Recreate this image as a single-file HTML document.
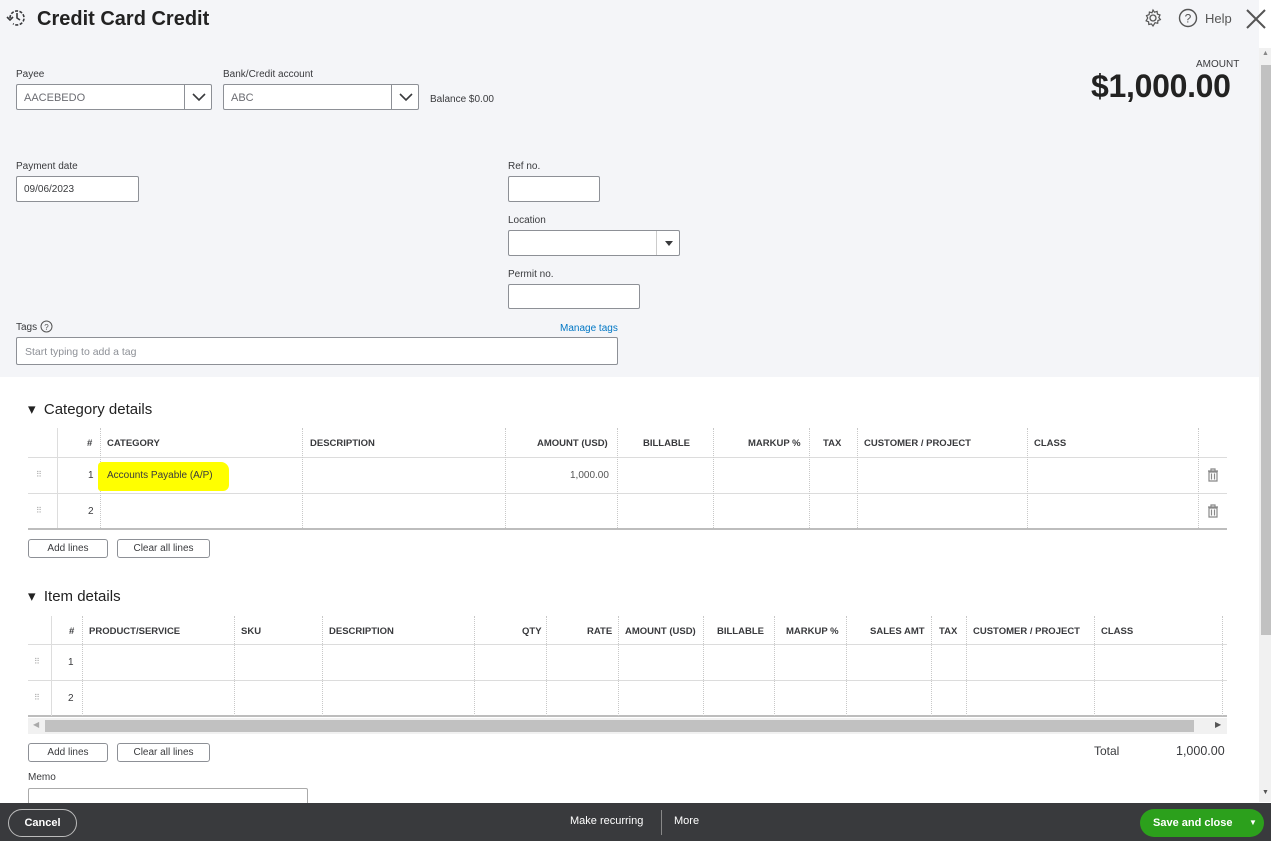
<!DOCTYPE html>
<html><head><meta charset="utf-8"><style>
*{box-sizing:border-box;margin:0;padding:0}
body{width:1271px;height:841px;overflow:hidden;position:relative;background:#fff;font-family:"Liberation Sans",Arial,sans-serif;color:#393a3d;font-size:11px}
.a{position:absolute}
.top{left:0;top:0;width:1259px;height:377px;background:#f4f5f8}
.lbl{font-size:10px;color:#393a3d}
.inp{background:#fff;border:1px solid #8d9096;border-radius:2px}
.th{font-size:9.5px;font-weight:bold;color:#393a3d;top:0}
.vl{width:0;border-left:1px dotted #c8c8c8}
.hl{height:1px;background:#dcdcdc}
.btn{border:1px solid #8d9096;border-radius:3px;background:#fff;font-size:10px;text-align:center;line-height:17px;height:19px}
</style></head><body>
<div class="a top"></div>
<svg class="a" style="left:6px;top:8px" width="22" height="20" viewBox="0 0 22 20"><path d="M4 10a7 7 0 1 1 3 5.7" fill="none" stroke="#393a3d" stroke-width="1.6" stroke-dasharray="3 1.5"/><path d="M11 5v5l3 2" fill="none" stroke="#393a3d" stroke-width="1.6"/><path d="M1 9l3 3 3-3" fill="none" stroke="#393a3d" stroke-width="1.6"/></svg>
<div class="a" style="left:37px;top:8px;font-size:20px;font-weight:bold;color:#222">Credit Card Credit</div>
<svg class="a" style="left:1143px;top:8px" width="20" height="20" viewBox="0 0 20 20"><circle cx="10" cy="10" r="3" fill="none" stroke="#555" stroke-width="1.3"/><path d="M10 2l1.5 2.2 2.6-.8.3 2.7 2.6.9-1.2 2.4 1.6 2.2-2.5 1-.2 2.7-2.6-.6L10 18l-1.6-2.1-2.6.6-.2-2.7-2.5-1L4.7 10 3.5 7.6l2.6-.9.3-2.7 2.6.8z" fill="none" stroke="#555" stroke-width="1.2"/></svg>
<svg class="a" style="left:1178px;top:8px" width="20" height="20" viewBox="0 0 20 20"><circle cx="10" cy="10" r="8.5" fill="none" stroke="#555" stroke-width="1.4"/><text x="10" y="14.5" font-size="12" text-anchor="middle" fill="#555" font-family="Liberation Sans">?</text></svg>
<div class="a" style="left:1205px;top:11px;font-size:13px;color:#555">Help</div>
<svg class="a" style="left:1245px;top:8px" width="22" height="22" viewBox="0 0 22 22"><path d="M2 2l18 18M20 2L2 20" stroke="#555" stroke-width="2"/></svg>
<div class="a" style="left:1196px;top:59px;font-size:10px">AMOUNT</div>
<div class="a" style="left:1091px;top:68px;font-size:32px;font-weight:bold;color:#222;letter-spacing:-0.3px">$1,000.00</div>

<div class="a lbl" style="left:16px;top:69px">Payee</div>
<div class="a inp" style="left:16px;top:84px;width:196px;height:26px"><span class="a" style="left:7px;top:7px;color:#6b6c72">AACEBEDO</span><span class="a" style="left:167px;top:0;height:24px;border-left:1px solid #8d9096;width:28px"></span><svg class="a" style="left:175px;top:8px" width="14" height="9"><path d="M1 1l6 6 6-6" fill="none" stroke="#393a3d" stroke-width="1.6"/></svg></div>
<div class="a lbl" style="left:223px;top:69px">Bank/Credit account</div>
<div class="a inp" style="left:223px;top:84px;width:196px;height:26px"><span class="a" style="left:7px;top:7px;color:#6b6c72">ABC</span><span class="a" style="left:167px;top:0;height:24px;border-left:1px solid #8d9096;width:28px"></span><svg class="a" style="left:175px;top:8px" width="14" height="9"><path d="M1 1l6 6 6-6" fill="none" stroke="#393a3d" stroke-width="1.6"/></svg></div>
<div class="a" style="left:430px;top:94px;font-size:10px">Balance $0.00</div>

<div class="a lbl" style="left:16px;top:161px">Payment date</div>
<div class="a inp" style="left:16px;top:176px;width:123px;height:26px"><span class="a" style="left:7px;top:7px;font-size:10px">09/06/2023</span></div>
<div class="a lbl" style="left:508px;top:161px">Ref no.</div>
<div class="a inp" style="left:508px;top:176px;width:92px;height:26px"></div>
<div class="a lbl" style="left:508px;top:215px">Location</div>
<div class="a inp" style="left:508px;top:230px;width:172px;height:26px"><span class="a" style="left:147px;top:0;height:24px;border-left:1px solid #ccc"></span><svg class="a" style="left:156px;top:10px" width="8" height="5"><path d="M0 0h8L4 5z" fill="#393a3d"/></svg></div>
<div class="a lbl" style="left:508px;top:269px">Permit no.</div>
<div class="a inp" style="left:508px;top:284px;width:132px;height:25px"></div>
<div class="a lbl" style="left:16px;top:322px">Tags</div>
<svg class="a" style="left:40px;top:320px" width="13" height="13"><circle cx="6.5" cy="6.5" r="5.5" fill="none" stroke="#555"/><text x="6.5" y="10" font-size="8" text-anchor="middle" fill="#555" font-family="Liberation Sans">?</text></svg>
<div class="a" style="left:560px;top:323px;font-size:10px;color:#0077c5">Manage tags</div>
<div class="a inp" style="left:16px;top:337px;width:602px;height:28px"><span class="a" style="left:8px;top:8px;color:#8d9096;font-size:10.5px">Start typing to add a tag</span></div>

<div class="a" style="left:28px;top:400px;font-size:15px;color:#222">▾&nbsp; Category details</div>
<div class="a" style="left:28px;top:428px;width:1199px;height:102px">
<div class="a hl" style="left:0;top:29px;width:1199px"></div>
<div class="a hl" style="left:0;top:65px;width:1199px"></div>
<div class="a" style="left:0;top:100px;width:1199px;height:2px;background:#bdbdbd"></div>
<div class="a vl" style="left:29px;top:0;height:100px;border-left-style:solid;border-color:#ddd"></div>
<div class="a vl" style="left:72px;top:0;height:100px"></div>
<div class="a vl" style="left:274px;top:0;height:100px"></div>
<div class="a vl" style="left:477px;top:0;height:100px"></div>
<div class="a vl" style="left:589px;top:0;height:100px"></div>
<div class="a vl" style="left:685px;top:0;height:100px"></div>
<div class="a vl" style="left:781px;top:0;height:100px"></div>
<div class="a vl" style="left:829px;top:0;height:100px"></div>
<div class="a vl" style="left:999px;top:0;height:100px"></div>
<div class="a vl" style="left:1170px;top:0;height:100px"></div>
<div class="a th" style="left:59px;top:10px">#</div>
<div class="a th" style="left:79px;top:10px">CATEGORY</div>
<div class="a th" style="left:282px;top:10px">DESCRIPTION</div>
<div class="a th" style="left:509px;top:10px">AMOUNT (USD)</div>
<div class="a th" style="left:615px;top:10px">BILLABLE</div>
<div class="a th" style="left:720px;top:10px">MARKUP %</div>
<div class="a th" style="left:795px;top:10px">TAX</div>
<div class="a th" style="left:836px;top:10px">CUSTOMER / PROJECT</div>
<div class="a th" style="left:1006px;top:10px">CLASS</div>
<div class="a" style="left:8px;top:42px;color:#aaa;font-size:8px">⠿</div>
<div class="a" style="left:8px;top:78px;color:#aaa;font-size:8px">⠿</div>
<div class="a" style="left:60px;top:42px;font-size:10px">1</div>
<div class="a" style="left:60px;top:78px;font-size:10px">2</div>
<div class="a" style="left:70px;top:34px;width:131px;height:29px;background:#ffff00;border-radius:4px 8px 6px 3px"></div>
<div class="a" style="left:79px;top:42px;font-size:10px">Accounts Payable (A/P)</div>
<div class="a" style="left:542px;top:42px;font-size:10px;color:#555">1,000.00</div>
<svg class="a" style="left:1179px;top:40px" width="12" height="14"><path d="M1 3h10M4 3V1h4v2M2 4h8v9H2zM4.5 5.5v6M7.5 5.5v6" fill="none" stroke="#888" stroke-width="1.2"/></svg>
<svg class="a" style="left:1179px;top:76px" width="12" height="14"><path d="M1 3h10M4 3V1h4v2M2 4h8v9H2zM4.5 5.5v6M7.5 5.5v6" fill="none" stroke="#888" stroke-width="1.2"/></svg>
</div>
<div class="a btn" style="left:28px;top:539px;width:80px">Add lines</div>
<div class="a btn" style="left:117px;top:539px;width:93px">Clear all lines</div>

<div class="a" style="left:28px;top:587px;font-size:15px;color:#222">▾&nbsp; Item details</div>
<div class="a" style="left:28px;top:616px;width:1199px;height:120px">
<div class="a hl" style="left:0;top:28px;width:1199px"></div>
<div class="a hl" style="left:0;top:64px;width:1199px"></div>
<div class="a" style="left:0;top:99px;width:1199px;height:2px;background:#bdbdbd"></div>
<div class="a vl" style="left:23px;top:0;height:100px;border-left-style:solid;border-color:#ddd"></div>
<div class="a vl" style="left:54px;top:0;height:100px"></div>
<div class="a vl" style="left:206px;top:0;height:100px"></div>
<div class="a vl" style="left:294px;top:0;height:100px"></div>
<div class="a vl" style="left:446px;top:0;height:100px"></div>
<div class="a vl" style="left:518px;top:0;height:100px"></div>
<div class="a vl" style="left:590px;top:0;height:100px"></div>
<div class="a vl" style="left:675px;top:0;height:100px"></div>
<div class="a vl" style="left:746px;top:0;height:100px"></div>
<div class="a vl" style="left:818px;top:0;height:100px"></div>
<div class="a vl" style="left:903px;top:0;height:100px"></div>
<div class="a vl" style="left:938px;top:0;height:100px"></div>
<div class="a vl" style="left:1066px;top:0;height:100px"></div>
<div class="a vl" style="left:1194px;top:0;height:100px"></div>
<div class="a th" style="left:41px;top:10px">#</div>
<div class="a th" style="left:61px;top:10px">PRODUCT/SERVICE</div>
<div class="a th" style="left:213px;top:10px">SKU</div>
<div class="a th" style="left:301px;top:10px">DESCRIPTION</div>
<div class="a th" style="left:494px;top:10px">QTY</div>
<div class="a th" style="left:559px;top:10px">RATE</div>
<div class="a th" style="left:597px;top:10px">AMOUNT (USD)</div>
<div class="a th" style="left:689px;top:10px">BILLABLE</div>
<div class="a th" style="left:758px;top:10px">MARKUP %</div>
<div class="a th" style="left:842px;top:10px">SALES AMT</div>
<div class="a th" style="left:911px;top:10px">TAX</div>
<div class="a th" style="left:945px;top:10px">CUSTOMER / PROJECT</div>
<div class="a th" style="left:1073px;top:10px">CLASS</div>
<div class="a" style="left:6px;top:41px;color:#aaa;font-size:8px">⠿</div>
<div class="a" style="left:6px;top:77px;color:#aaa;font-size:8px">⠿</div>
<div class="a" style="left:40px;top:41px;font-size:10px">1</div>
<div class="a" style="left:40px;top:77px;font-size:10px">2</div>
<div class="a" style="left:0;top:102px;width:1199px;height:16px;background:#f1f1f1"></div>
<div class="a" style="left:17px;top:104px;width:1149px;height:12px;background:#c1c1c1"></div>
<div class="a" style="left:5px;top:104px;color:#aaa;font-size:8px">◀</div>
<div class="a" style="left:1187px;top:104px;color:#555;font-size:8px">▶</div>
</div>
<div class="a btn" style="left:28px;top:743px;width:80px">Add lines</div>
<div class="a btn" style="left:117px;top:743px;width:93px">Clear all lines</div>
<div class="a" style="left:1094px;top:744px;font-size:12px">Total</div>
<div class="a" style="left:1176px;top:744px;font-size:12.5px">1,000.00</div>
<div class="a lbl" style="left:28px;top:772px">Memo</div>
<div class="a" style="left:28px;top:788px;width:280px;height:20px;border:1px solid #aaa;border-radius:2px"></div>

<div class="a" style="left:1259px;top:48px;width:12px;height:754px;background:#f1f1f1"></div>
<div class="a" style="left:1261px;top:65px;width:10px;height:570px;background:#c1c1c1"></div>
<div class="a" style="left:1262px;top:50px;font-size:7px;color:#888">▲</div>
<div class="a" style="left:1262px;top:789px;font-size:7px;color:#555">▼</div>

<div class="a" style="left:0;top:803px;width:1271px;height:38px;background:#393a3d"></div>
<div class="a" style="left:8px;top:809px;width:69px;height:28px;border:1px solid #bbb;border-radius:14px;color:#fff;font-size:11px;font-weight:bold;text-align:center;line-height:26px">Cancel</div>
<div class="a" style="left:570px;top:815px;color:#fff;font-size:11px">Make recurring</div>
<div class="a" style="left:661px;top:810px;width:1px;height:25px;background:#888"></div>
<div class="a" style="left:674px;top:815px;color:#fff;font-size:11px">More</div>
<div class="a" style="left:1140px;top:809px;width:124px;height:28px;background:#2ca01c;border-radius:14px;color:#fff;font-size:11px;font-weight:bold;line-height:28px;padding-left:13px">Save and close <span style="position:absolute;left:109px;font-size:8px">▼</span></div>
</body></html>
